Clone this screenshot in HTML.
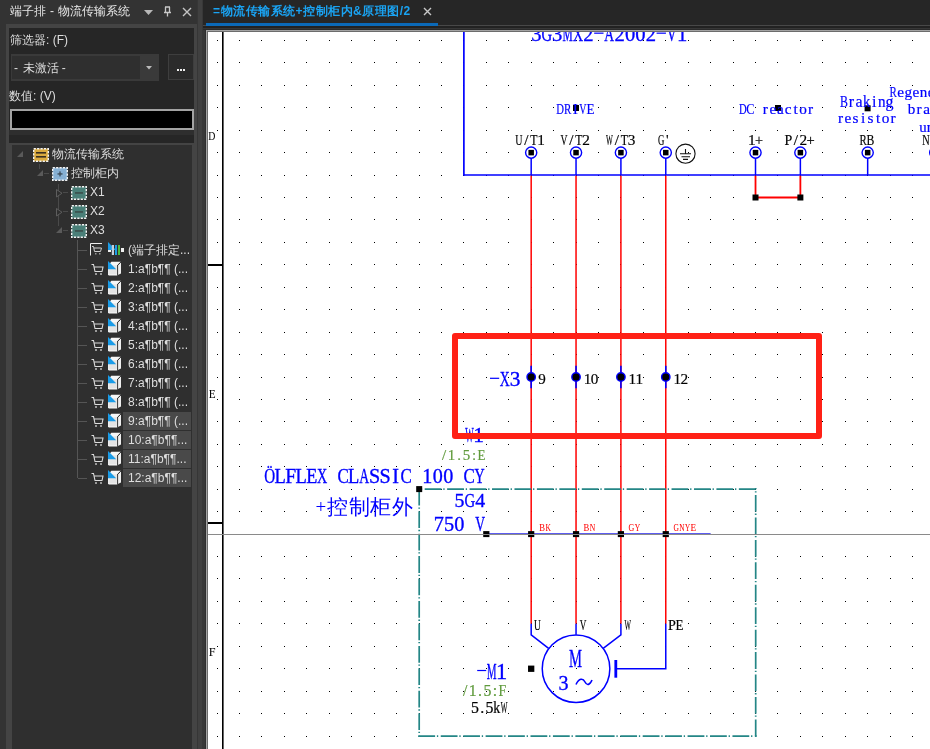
<!DOCTYPE html>
<html><head><meta charset="utf-8"><style>
html,body{margin:0;padding:0;width:930px;height:749px;overflow:hidden;background:#333}
</style></head><body>
<div style="position:relative;width:930px;height:749px;overflow:hidden;will-change:transform">

<div style="position:absolute;left:0;top:0;width:197px;height:749px;background:#333"></div>
<div style="position:absolute;left:10px;top:4px;font:12px 'Liberation Sans',sans-serif;color:#dedede;white-space:nowrap;line-height:14px;color:#e8e8e8;letter-spacing:0.15px">端子排 - 物流传输系统</div>
<svg style="position:absolute;left:143px;top:9px" width="11" height="7"><path d="M1 1H10L5.5 6Z" fill="#b8b8b8"/></svg>
<svg style="position:absolute;left:163px;top:6px" width="9" height="11"><path d="M2 1H7M2.5 1V6.5H6.5V1M1 6.5H8M4.5 6.5V10.5" fill="none" stroke="#c8c8c8" stroke-width="1.3"/></svg>
<svg style="position:absolute;left:182px;top:7px" width="10" height="10"><path d="M1 1L9 9M9 1L1 9" stroke="#c4c4c4" stroke-width="1.4"/></svg>
<div style="position:absolute;left:6px;top:24px;width:191px;height:725px;background:#444"></div>
<div style="position:absolute;left:9px;top:28px;width:185px;height:721px;background:#262626"></div>
<div style="position:absolute;left:10px;top:33px;font:12px 'Liberation Sans',sans-serif;color:#dedede;white-space:nowrap;line-height:14px">筛选器: (F)</div>
<div style="position:absolute;left:11px;top:54px;width:148px;height:27px;background:#3a3a3a"></div>
<div style="position:absolute;left:12px;top:56px;width:128px;height:23px;background:#2f2f2f"></div>
<div style="position:absolute;left:14px;top:61px;font:12px 'Liberation Sans',sans-serif;color:#dedede;white-space:nowrap;line-height:14px">-</div><div style="position:absolute;left:22.5px;top:61px;font:12px 'Liberation Sans',sans-serif;color:#dedede;white-space:nowrap;line-height:14px">未激活 -</div>
<svg style="position:absolute;left:146px;top:66px" width="6" height="4"><path d="M0 0H6L3 3.5Z" fill="#bbb"/></svg>
<div style="position:absolute;left:168px;top:54px;width:24px;height:24px;border:1px solid #3e3e3e;background:#2b2b2b"></div>
<div style="position:absolute;left:177px;top:69px;width:2px;height:2px;background:#eee;box-shadow:3px 0 #eee,6px 0 #eee"></div>
<div style="position:absolute;left:9px;top:89px;font:12px 'Liberation Sans',sans-serif;color:#dedede;white-space:nowrap;line-height:14px">数值: (V)</div>
<div style="position:absolute;left:10px;top:109px;width:180px;height:17px;border:2px solid #a3a3a3;background:#000"></div>
<div style="position:absolute;left:9px;top:130px;width:185px;height:5px;background:#2e2e2e"></div>
<div style="position:absolute;left:9px;top:143px;width:185px;height:606px;background:#444"></div>
<div style="position:absolute;left:12px;top:145px;width:180px;height:604px;background:#2f2f2f"></div>
<div style="position:absolute;left:39px;top:164px;width:1px;height:5px;background:#4a4a4a"></div><div style="position:absolute;left:44px;top:173px;width:5px;height:1px;background:#4a4a4a"></div><div style="position:absolute;left:58px;top:184px;width:1px;height:42px;background:#4a4a4a"></div><div style="position:absolute;left:63px;top:192px;width:5px;height:1px;background:#4a4a4a"></div><div style="position:absolute;left:63px;top:211px;width:5px;height:1px;background:#4a4a4a"></div><div style="position:absolute;left:63px;top:230px;width:5px;height:1px;background:#4a4a4a"></div><div style="position:absolute;left:77px;top:240px;width:1px;height:238px;background:#555"></div><svg style="position:absolute;left:17px;top:151px" width="6" height="6"><path d="M6 0V6H0Z" fill="#5a5a5a"/></svg><svg style="position:absolute;left:33px;top:148px" width="17" height="15"><rect x="0.7" y="0.7" width="14.6" height="12.6" fill="#d9aa3f" stroke="#f4f4f4" stroke-width="1.4" stroke-dasharray="2.2 1.2"/><rect x="3" y="4" width="10" height="1.6" fill="#3a3020"/><rect x="3" y="8" width="10" height="1.6" fill="#3a3020"/></svg><div style="position:absolute;font:12px 'Liberation Sans',sans-serif;color:#dedede;white-space:nowrap;line-height:14px;left:52px;top:147px;">物流传输系统</div><svg style="position:absolute;left:37px;top:170px" width="6" height="6"><path d="M6 0V6H0Z" fill="#5a5a5a"/></svg><svg style="position:absolute;left:52px;top:167px" width="17" height="15"><rect x="0.7" y="0.7" width="14.6" height="12.6" fill="#86b0d4" stroke="#f4f4f4" stroke-width="1.4" stroke-dasharray="2.2 1.2"/><rect x="5.5" y="6.3" width="5" height="1.3" fill="#3b4a58"/><rect x="7.35" y="4.4" width="1.3" height="5" fill="#3b4a58"/></svg><div style="position:absolute;font:12px 'Liberation Sans',sans-serif;color:#dedede;white-space:nowrap;line-height:14px;left:71px;top:166px;">控制柜内</div><svg style="position:absolute;left:56px;top:189px" width="7" height="10"><path d="M0.5 0.5V8L6 4.25Z" fill="#2f2f2f" stroke="#5e5e5e" stroke-width="1"/></svg><svg style="position:absolute;left:71px;top:186px" width="17" height="15"><rect x="0.7" y="0.7" width="14.6" height="12.6" fill="#4a7f78" stroke="#f4f4f4" stroke-width="1.4" stroke-dasharray="2.2 1.2"/><rect x="4" y="6.2" width="8" height="1.5" fill="#3a4a48"/></svg><div style="position:absolute;font:12px 'Liberation Sans',sans-serif;color:#dedede;white-space:nowrap;line-height:14px;left:90px;top:185px;">X1</div><svg style="position:absolute;left:56px;top:208px" width="7" height="10"><path d="M0.5 0.5V8L6 4.25Z" fill="#2f2f2f" stroke="#5e5e5e" stroke-width="1"/></svg><svg style="position:absolute;left:71px;top:205px" width="17" height="15"><rect x="0.7" y="0.7" width="14.6" height="12.6" fill="#4a7f78" stroke="#f4f4f4" stroke-width="1.4" stroke-dasharray="2.2 1.2"/><rect x="4" y="6.2" width="8" height="1.5" fill="#3a4a48"/></svg><div style="position:absolute;font:12px 'Liberation Sans',sans-serif;color:#dedede;white-space:nowrap;line-height:14px;left:90px;top:204px;">X2</div><svg style="position:absolute;left:56px;top:227px" width="6" height="6"><path d="M6 0V6H0Z" fill="#5a5a5a"/></svg><svg style="position:absolute;left:71px;top:224px" width="17" height="15"><rect x="0.7" y="0.7" width="14.6" height="12.6" fill="#4a7f78" stroke="#f4f4f4" stroke-width="1.4" stroke-dasharray="2.2 1.2"/><rect x="4" y="6.2" width="8" height="1.5" fill="#3a4a48"/></svg><div style="position:absolute;font:12px 'Liberation Sans',sans-serif;color:#dedede;white-space:nowrap;line-height:14px;left:90px;top:223px;">X3</div><div style="position:absolute;left:78px;top:250px;width:9px;height:1px;background:#555"></div><svg style="position:absolute;left:89px;top:242px" width="14" height="14"><path d="M1.5 13.5V1.5H13" fill="none" stroke="#ececec" stroke-width="1"/><path d="M3 4.5H4.5L5.5 9.5H11.5L12.5 6H5" fill="none" stroke="#d0d0d0" stroke-width="1"/><rect x="6" y="11" width="1.5" height="1.5" fill="#999"/><rect x="10" y="11" width="1.5" height="1.5" fill="#999"/></svg><svg style="position:absolute;left:108px;top:242px" width="18" height="14"><path d="M0 0V8H8Z" fill="#1d9ce6"/><rect x="3.8" y="3" width="2.2" height="10" fill="#c5d0da"/><rect x="7" y="3" width="2" height="10" fill="#1d9ce6"/><rect x="10" y="3" width="2" height="10" fill="#4dbb3f"/><rect x="13" y="6" width="3" height="4" fill="#f0f0f0"/><rect x="0" y="8" width="3" height="2" fill="#f0f0f0"/></svg><div style="position:absolute;font:12px 'Liberation Sans',sans-serif;color:#dedede;white-space:nowrap;line-height:14px;left:128px;top:243px;">(端子排定...</div><div style="position:absolute;left:78px;top:269px;width:9px;height:1px;background:#555"></div><svg style="position:absolute;left:91px;top:263px" width="13" height="13"><path d="M0.5 1.5H2.5L4 8.5H11L12 4H3.2" fill="none" stroke="#dcdcdc" stroke-width="1.1"/><rect x="4" y="10" width="2" height="2" fill="#9a9a9a"/><rect x="9" y="10" width="2" height="2" fill="#9a9a9a"/></svg><svg style="position:absolute;left:108px;top:261px" width="14" height="15"><path d="M3.3 0.8H12.8L9.6 4.2H0.5Z" fill="#f6f6f6"/><path d="M9.9 4.2L13 1.3V12.5L9.9 14Z" fill="#efefef"/><path d="M0.6 4.2H9.3V14H0.6Z" fill="#e4e4e4" stroke="#fafafa" stroke-width="1"/><path d="M9.6 4V14.2M9.6 4.2L12.8 1.2" stroke="#222" stroke-width="0.9" fill="none"/><path d="M0 0V8.2H8.2Z" fill="#1a9ce8"/></svg><div style="position:absolute;font:12px 'Liberation Sans',sans-serif;color:#dedede;white-space:nowrap;line-height:14px;left:128px;top:262px;">1:a¶b¶¶ (...</div><div style="position:absolute;left:78px;top:288px;width:9px;height:1px;background:#555"></div><svg style="position:absolute;left:91px;top:282px" width="13" height="13"><path d="M0.5 1.5H2.5L4 8.5H11L12 4H3.2" fill="none" stroke="#dcdcdc" stroke-width="1.1"/><rect x="4" y="10" width="2" height="2" fill="#9a9a9a"/><rect x="9" y="10" width="2" height="2" fill="#9a9a9a"/></svg><svg style="position:absolute;left:108px;top:280px" width="14" height="15"><path d="M3.3 0.8H12.8L9.6 4.2H0.5Z" fill="#f6f6f6"/><path d="M9.9 4.2L13 1.3V12.5L9.9 14Z" fill="#efefef"/><path d="M0.6 4.2H9.3V14H0.6Z" fill="#e4e4e4" stroke="#fafafa" stroke-width="1"/><path d="M9.6 4V14.2M9.6 4.2L12.8 1.2" stroke="#222" stroke-width="0.9" fill="none"/><path d="M0 0V8.2H8.2Z" fill="#1a9ce8"/></svg><div style="position:absolute;font:12px 'Liberation Sans',sans-serif;color:#dedede;white-space:nowrap;line-height:14px;left:128px;top:281px;">2:a¶b¶¶ (...</div><div style="position:absolute;left:78px;top:307px;width:9px;height:1px;background:#555"></div><svg style="position:absolute;left:91px;top:301px" width="13" height="13"><path d="M0.5 1.5H2.5L4 8.5H11L12 4H3.2" fill="none" stroke="#dcdcdc" stroke-width="1.1"/><rect x="4" y="10" width="2" height="2" fill="#9a9a9a"/><rect x="9" y="10" width="2" height="2" fill="#9a9a9a"/></svg><svg style="position:absolute;left:108px;top:299px" width="14" height="15"><path d="M3.3 0.8H12.8L9.6 4.2H0.5Z" fill="#f6f6f6"/><path d="M9.9 4.2L13 1.3V12.5L9.9 14Z" fill="#efefef"/><path d="M0.6 4.2H9.3V14H0.6Z" fill="#e4e4e4" stroke="#fafafa" stroke-width="1"/><path d="M9.6 4V14.2M9.6 4.2L12.8 1.2" stroke="#222" stroke-width="0.9" fill="none"/><path d="M0 0V8.2H8.2Z" fill="#1a9ce8"/></svg><div style="position:absolute;font:12px 'Liberation Sans',sans-serif;color:#dedede;white-space:nowrap;line-height:14px;left:128px;top:300px;">3:a¶b¶¶ (...</div><div style="position:absolute;left:78px;top:326px;width:9px;height:1px;background:#555"></div><svg style="position:absolute;left:91px;top:320px" width="13" height="13"><path d="M0.5 1.5H2.5L4 8.5H11L12 4H3.2" fill="none" stroke="#dcdcdc" stroke-width="1.1"/><rect x="4" y="10" width="2" height="2" fill="#9a9a9a"/><rect x="9" y="10" width="2" height="2" fill="#9a9a9a"/></svg><svg style="position:absolute;left:108px;top:318px" width="14" height="15"><path d="M3.3 0.8H12.8L9.6 4.2H0.5Z" fill="#f6f6f6"/><path d="M9.9 4.2L13 1.3V12.5L9.9 14Z" fill="#efefef"/><path d="M0.6 4.2H9.3V14H0.6Z" fill="#e4e4e4" stroke="#fafafa" stroke-width="1"/><path d="M9.6 4V14.2M9.6 4.2L12.8 1.2" stroke="#222" stroke-width="0.9" fill="none"/><path d="M0 0V8.2H8.2Z" fill="#1a9ce8"/></svg><div style="position:absolute;font:12px 'Liberation Sans',sans-serif;color:#dedede;white-space:nowrap;line-height:14px;left:128px;top:319px;">4:a¶b¶¶ (...</div><div style="position:absolute;left:78px;top:345px;width:9px;height:1px;background:#555"></div><svg style="position:absolute;left:91px;top:339px" width="13" height="13"><path d="M0.5 1.5H2.5L4 8.5H11L12 4H3.2" fill="none" stroke="#dcdcdc" stroke-width="1.1"/><rect x="4" y="10" width="2" height="2" fill="#9a9a9a"/><rect x="9" y="10" width="2" height="2" fill="#9a9a9a"/></svg><svg style="position:absolute;left:108px;top:337px" width="14" height="15"><path d="M3.3 0.8H12.8L9.6 4.2H0.5Z" fill="#f6f6f6"/><path d="M9.9 4.2L13 1.3V12.5L9.9 14Z" fill="#efefef"/><path d="M0.6 4.2H9.3V14H0.6Z" fill="#e4e4e4" stroke="#fafafa" stroke-width="1"/><path d="M9.6 4V14.2M9.6 4.2L12.8 1.2" stroke="#222" stroke-width="0.9" fill="none"/><path d="M0 0V8.2H8.2Z" fill="#1a9ce8"/></svg><div style="position:absolute;font:12px 'Liberation Sans',sans-serif;color:#dedede;white-space:nowrap;line-height:14px;left:128px;top:338px;">5:a¶b¶¶ (...</div><div style="position:absolute;left:78px;top:364px;width:9px;height:1px;background:#555"></div><svg style="position:absolute;left:91px;top:358px" width="13" height="13"><path d="M0.5 1.5H2.5L4 8.5H11L12 4H3.2" fill="none" stroke="#dcdcdc" stroke-width="1.1"/><rect x="4" y="10" width="2" height="2" fill="#9a9a9a"/><rect x="9" y="10" width="2" height="2" fill="#9a9a9a"/></svg><svg style="position:absolute;left:108px;top:356px" width="14" height="15"><path d="M3.3 0.8H12.8L9.6 4.2H0.5Z" fill="#f6f6f6"/><path d="M9.9 4.2L13 1.3V12.5L9.9 14Z" fill="#efefef"/><path d="M0.6 4.2H9.3V14H0.6Z" fill="#e4e4e4" stroke="#fafafa" stroke-width="1"/><path d="M9.6 4V14.2M9.6 4.2L12.8 1.2" stroke="#222" stroke-width="0.9" fill="none"/><path d="M0 0V8.2H8.2Z" fill="#1a9ce8"/></svg><div style="position:absolute;font:12px 'Liberation Sans',sans-serif;color:#dedede;white-space:nowrap;line-height:14px;left:128px;top:357px;">6:a¶b¶¶ (...</div><div style="position:absolute;left:78px;top:383px;width:9px;height:1px;background:#555"></div><svg style="position:absolute;left:91px;top:377px" width="13" height="13"><path d="M0.5 1.5H2.5L4 8.5H11L12 4H3.2" fill="none" stroke="#dcdcdc" stroke-width="1.1"/><rect x="4" y="10" width="2" height="2" fill="#9a9a9a"/><rect x="9" y="10" width="2" height="2" fill="#9a9a9a"/></svg><svg style="position:absolute;left:108px;top:375px" width="14" height="15"><path d="M3.3 0.8H12.8L9.6 4.2H0.5Z" fill="#f6f6f6"/><path d="M9.9 4.2L13 1.3V12.5L9.9 14Z" fill="#efefef"/><path d="M0.6 4.2H9.3V14H0.6Z" fill="#e4e4e4" stroke="#fafafa" stroke-width="1"/><path d="M9.6 4V14.2M9.6 4.2L12.8 1.2" stroke="#222" stroke-width="0.9" fill="none"/><path d="M0 0V8.2H8.2Z" fill="#1a9ce8"/></svg><div style="position:absolute;font:12px 'Liberation Sans',sans-serif;color:#dedede;white-space:nowrap;line-height:14px;left:128px;top:376px;">7:a¶b¶¶ (...</div><div style="position:absolute;left:78px;top:402px;width:9px;height:1px;background:#555"></div><svg style="position:absolute;left:91px;top:396px" width="13" height="13"><path d="M0.5 1.5H2.5L4 8.5H11L12 4H3.2" fill="none" stroke="#dcdcdc" stroke-width="1.1"/><rect x="4" y="10" width="2" height="2" fill="#9a9a9a"/><rect x="9" y="10" width="2" height="2" fill="#9a9a9a"/></svg><svg style="position:absolute;left:108px;top:394px" width="14" height="15"><path d="M3.3 0.8H12.8L9.6 4.2H0.5Z" fill="#f6f6f6"/><path d="M9.9 4.2L13 1.3V12.5L9.9 14Z" fill="#efefef"/><path d="M0.6 4.2H9.3V14H0.6Z" fill="#e4e4e4" stroke="#fafafa" stroke-width="1"/><path d="M9.6 4V14.2M9.6 4.2L12.8 1.2" stroke="#222" stroke-width="0.9" fill="none"/><path d="M0 0V8.2H8.2Z" fill="#1a9ce8"/></svg><div style="position:absolute;font:12px 'Liberation Sans',sans-serif;color:#dedede;white-space:nowrap;line-height:14px;left:128px;top:395px;">8:a¶b¶¶ (...</div><div style="position:absolute;left:78px;top:421px;width:9px;height:1px;background:#555"></div><div style="position:absolute;left:123px;top:412px;width:68px;height:18px;background:#494949"></div><svg style="position:absolute;left:91px;top:415px" width="13" height="13"><path d="M0.5 1.5H2.5L4 8.5H11L12 4H3.2" fill="none" stroke="#dcdcdc" stroke-width="1.1"/><rect x="4" y="10" width="2" height="2" fill="#9a9a9a"/><rect x="9" y="10" width="2" height="2" fill="#9a9a9a"/></svg><svg style="position:absolute;left:108px;top:413px" width="14" height="15"><path d="M3.3 0.8H12.8L9.6 4.2H0.5Z" fill="#f6f6f6"/><path d="M9.9 4.2L13 1.3V12.5L9.9 14Z" fill="#efefef"/><path d="M0.6 4.2H9.3V14H0.6Z" fill="#e4e4e4" stroke="#fafafa" stroke-width="1"/><path d="M9.6 4V14.2M9.6 4.2L12.8 1.2" stroke="#222" stroke-width="0.9" fill="none"/><path d="M0 0V8.2H8.2Z" fill="#1a9ce8"/></svg><div style="position:absolute;font:12px 'Liberation Sans',sans-serif;color:#dedede;white-space:nowrap;line-height:14px;left:128px;top:414px;">9:a¶b¶¶ (...</div><div style="position:absolute;left:78px;top:440px;width:9px;height:1px;background:#555"></div><div style="position:absolute;left:123px;top:431px;width:68px;height:18px;background:#494949"></div><svg style="position:absolute;left:91px;top:434px" width="13" height="13"><path d="M0.5 1.5H2.5L4 8.5H11L12 4H3.2" fill="none" stroke="#dcdcdc" stroke-width="1.1"/><rect x="4" y="10" width="2" height="2" fill="#9a9a9a"/><rect x="9" y="10" width="2" height="2" fill="#9a9a9a"/></svg><svg style="position:absolute;left:108px;top:432px" width="14" height="15"><path d="M3.3 0.8H12.8L9.6 4.2H0.5Z" fill="#f6f6f6"/><path d="M9.9 4.2L13 1.3V12.5L9.9 14Z" fill="#efefef"/><path d="M0.6 4.2H9.3V14H0.6Z" fill="#e4e4e4" stroke="#fafafa" stroke-width="1"/><path d="M9.6 4V14.2M9.6 4.2L12.8 1.2" stroke="#222" stroke-width="0.9" fill="none"/><path d="M0 0V8.2H8.2Z" fill="#1a9ce8"/></svg><div style="position:absolute;font:12px 'Liberation Sans',sans-serif;color:#dedede;white-space:nowrap;line-height:14px;left:128px;top:433px;">10:a¶b¶¶...</div><div style="position:absolute;left:78px;top:459px;width:9px;height:1px;background:#555"></div><div style="position:absolute;left:123px;top:450px;width:68px;height:18px;background:#494949"></div><svg style="position:absolute;left:91px;top:453px" width="13" height="13"><path d="M0.5 1.5H2.5L4 8.5H11L12 4H3.2" fill="none" stroke="#dcdcdc" stroke-width="1.1"/><rect x="4" y="10" width="2" height="2" fill="#9a9a9a"/><rect x="9" y="10" width="2" height="2" fill="#9a9a9a"/></svg><svg style="position:absolute;left:108px;top:451px" width="14" height="15"><path d="M3.3 0.8H12.8L9.6 4.2H0.5Z" fill="#f6f6f6"/><path d="M9.9 4.2L13 1.3V12.5L9.9 14Z" fill="#efefef"/><path d="M0.6 4.2H9.3V14H0.6Z" fill="#e4e4e4" stroke="#fafafa" stroke-width="1"/><path d="M9.6 4V14.2M9.6 4.2L12.8 1.2" stroke="#222" stroke-width="0.9" fill="none"/><path d="M0 0V8.2H8.2Z" fill="#1a9ce8"/></svg><div style="position:absolute;font:12px 'Liberation Sans',sans-serif;color:#dedede;white-space:nowrap;line-height:14px;left:128px;top:452px;">11:a¶b¶¶...</div><div style="position:absolute;left:78px;top:478px;width:9px;height:1px;background:#555"></div><div style="position:absolute;left:123px;top:469px;width:68px;height:18px;background:#494949"></div><svg style="position:absolute;left:91px;top:472px" width="13" height="13"><path d="M0.5 1.5H2.5L4 8.5H11L12 4H3.2" fill="none" stroke="#dcdcdc" stroke-width="1.1"/><rect x="4" y="10" width="2" height="2" fill="#9a9a9a"/><rect x="9" y="10" width="2" height="2" fill="#9a9a9a"/></svg><svg style="position:absolute;left:108px;top:470px" width="14" height="15"><path d="M3.3 0.8H12.8L9.6 4.2H0.5Z" fill="#f6f6f6"/><path d="M9.9 4.2L13 1.3V12.5L9.9 14Z" fill="#efefef"/><path d="M0.6 4.2H9.3V14H0.6Z" fill="#e4e4e4" stroke="#fafafa" stroke-width="1"/><path d="M9.6 4V14.2M9.6 4.2L12.8 1.2" stroke="#222" stroke-width="0.9" fill="none"/><path d="M0 0V8.2H8.2Z" fill="#1a9ce8"/></svg><div style="position:absolute;font:12px 'Liberation Sans',sans-serif;color:#dedede;white-space:nowrap;line-height:14px;left:128px;top:471px;">12:a¶b¶¶...</div>
<div style="position:absolute;left:197px;top:0;width:9px;height:749px;background:linear-gradient(to right,#363636 0 1px,#404040 1px 5px,#383838 5px 8px,#2e2e2e 8px 9px)"></div>


<div style="position:absolute;left:203px;top:0;width:727px;height:30px;background:linear-gradient(to bottom,#262626 0 25px,#484848 25px 26px,#222 26px 28px,#363636 28px 29px,#2a2a2a 29px 30px)"></div>
<div style="position:absolute;left:206px;top:23px;width:232px;height:3px;background:#0b69b8"></div>
<div style="position:absolute;left:213px;top:3px;font:bold 12px 'Liberation Sans',sans-serif;color:#1aa3f2;white-space:nowrap;line-height:16px;letter-spacing:0.5px">=物流传输系统+控制柜内&amp;原理图/2</div>
<svg style="position:absolute;left:423px;top:7px" width="9" height="9"><path d="M1 1L8 8M8 1L1 8" stroke="#c8c8c8" stroke-width="1.4"/></svg>
<div style="position:absolute;left:206px;top:30px;width:724px;height:719px;background:#a3a3a3"></div>
<div style="position:absolute;left:207px;top:31px;width:723px;height:718px;background:#6c6c6c"></div>
<div style="position:absolute;left:208px;top:32px;width:722px;height:717px;background:#fff"></div>

<svg width="930" height="749" viewBox="0 0 930 749" style="position:absolute;left:0;top:0"><defs><clipPath id="cv"><rect x="208" y="32" width="722" height="717"/></clipPath></defs><g clip-path="url(#cv)"><path d="M217 40h1v1h-1zM217 62h1v1h-1zM217 85h1v1h-1zM217 107h1v1h-1zM217 130h1v1h-1zM217 152h1v1h-1zM217 175h1v1h-1zM217 197h1v1h-1zM217 219h1v1h-1zM217 242h1v1h-1zM217 264h1v1h-1zM217 287h1v1h-1zM217 309h1v1h-1zM217 332h1v1h-1zM217 354h1v1h-1zM217 377h1v1h-1zM217 399h1v1h-1zM217 421h1v1h-1zM217 444h1v1h-1zM217 466h1v1h-1zM217 489h1v1h-1zM217 511h1v1h-1zM217 534h1v1h-1zM217 556h1v1h-1zM217 578h1v1h-1zM217 601h1v1h-1zM217 623h1v1h-1zM217 646h1v1h-1zM217 668h1v1h-1zM217 691h1v1h-1zM217 713h1v1h-1zM217 736h1v1h-1zM239 40h1v1h-1zM239 62h1v1h-1zM239 85h1v1h-1zM239 107h1v1h-1zM239 130h1v1h-1zM239 152h1v1h-1zM239 175h1v1h-1zM239 197h1v1h-1zM239 219h1v1h-1zM239 242h1v1h-1zM239 264h1v1h-1zM239 287h1v1h-1zM239 309h1v1h-1zM239 332h1v1h-1zM239 354h1v1h-1zM239 377h1v1h-1zM239 399h1v1h-1zM239 421h1v1h-1zM239 444h1v1h-1zM239 466h1v1h-1zM239 489h1v1h-1zM239 511h1v1h-1zM239 534h1v1h-1zM239 556h1v1h-1zM239 578h1v1h-1zM239 601h1v1h-1zM239 623h1v1h-1zM239 646h1v1h-1zM239 668h1v1h-1zM239 691h1v1h-1zM239 713h1v1h-1zM239 736h1v1h-1zM261 40h1v1h-1zM261 62h1v1h-1zM261 85h1v1h-1zM261 107h1v1h-1zM261 130h1v1h-1zM261 152h1v1h-1zM261 175h1v1h-1zM261 197h1v1h-1zM261 219h1v1h-1zM261 242h1v1h-1zM261 264h1v1h-1zM261 287h1v1h-1zM261 309h1v1h-1zM261 332h1v1h-1zM261 354h1v1h-1zM261 377h1v1h-1zM261 399h1v1h-1zM261 421h1v1h-1zM261 444h1v1h-1zM261 466h1v1h-1zM261 489h1v1h-1zM261 511h1v1h-1zM261 534h1v1h-1zM261 556h1v1h-1zM261 578h1v1h-1zM261 601h1v1h-1zM261 623h1v1h-1zM261 646h1v1h-1zM261 668h1v1h-1zM261 691h1v1h-1zM261 713h1v1h-1zM261 736h1v1h-1zM284 40h1v1h-1zM284 62h1v1h-1zM284 85h1v1h-1zM284 107h1v1h-1zM284 130h1v1h-1zM284 152h1v1h-1zM284 175h1v1h-1zM284 197h1v1h-1zM284 219h1v1h-1zM284 242h1v1h-1zM284 264h1v1h-1zM284 287h1v1h-1zM284 309h1v1h-1zM284 332h1v1h-1zM284 354h1v1h-1zM284 377h1v1h-1zM284 399h1v1h-1zM284 421h1v1h-1zM284 444h1v1h-1zM284 466h1v1h-1zM284 489h1v1h-1zM284 511h1v1h-1zM284 534h1v1h-1zM284 556h1v1h-1zM284 578h1v1h-1zM284 601h1v1h-1zM284 623h1v1h-1zM284 646h1v1h-1zM284 668h1v1h-1zM284 691h1v1h-1zM284 713h1v1h-1zM284 736h1v1h-1zM306 40h1v1h-1zM306 62h1v1h-1zM306 85h1v1h-1zM306 107h1v1h-1zM306 130h1v1h-1zM306 152h1v1h-1zM306 175h1v1h-1zM306 197h1v1h-1zM306 219h1v1h-1zM306 242h1v1h-1zM306 264h1v1h-1zM306 287h1v1h-1zM306 309h1v1h-1zM306 332h1v1h-1zM306 354h1v1h-1zM306 377h1v1h-1zM306 399h1v1h-1zM306 421h1v1h-1zM306 444h1v1h-1zM306 466h1v1h-1zM306 489h1v1h-1zM306 511h1v1h-1zM306 534h1v1h-1zM306 556h1v1h-1zM306 578h1v1h-1zM306 601h1v1h-1zM306 623h1v1h-1zM306 646h1v1h-1zM306 668h1v1h-1zM306 691h1v1h-1zM306 713h1v1h-1zM306 736h1v1h-1zM329 40h1v1h-1zM329 62h1v1h-1zM329 85h1v1h-1zM329 107h1v1h-1zM329 130h1v1h-1zM329 152h1v1h-1zM329 175h1v1h-1zM329 197h1v1h-1zM329 219h1v1h-1zM329 242h1v1h-1zM329 264h1v1h-1zM329 287h1v1h-1zM329 309h1v1h-1zM329 332h1v1h-1zM329 354h1v1h-1zM329 377h1v1h-1zM329 399h1v1h-1zM329 421h1v1h-1zM329 444h1v1h-1zM329 466h1v1h-1zM329 489h1v1h-1zM329 511h1v1h-1zM329 534h1v1h-1zM329 556h1v1h-1zM329 578h1v1h-1zM329 601h1v1h-1zM329 623h1v1h-1zM329 646h1v1h-1zM329 668h1v1h-1zM329 691h1v1h-1zM329 713h1v1h-1zM329 736h1v1h-1zM351 40h1v1h-1zM351 62h1v1h-1zM351 85h1v1h-1zM351 107h1v1h-1zM351 130h1v1h-1zM351 152h1v1h-1zM351 175h1v1h-1zM351 197h1v1h-1zM351 219h1v1h-1zM351 242h1v1h-1zM351 264h1v1h-1zM351 287h1v1h-1zM351 309h1v1h-1zM351 332h1v1h-1zM351 354h1v1h-1zM351 377h1v1h-1zM351 399h1v1h-1zM351 421h1v1h-1zM351 444h1v1h-1zM351 466h1v1h-1zM351 489h1v1h-1zM351 511h1v1h-1zM351 534h1v1h-1zM351 556h1v1h-1zM351 578h1v1h-1zM351 601h1v1h-1zM351 623h1v1h-1zM351 646h1v1h-1zM351 668h1v1h-1zM351 691h1v1h-1zM351 713h1v1h-1zM351 736h1v1h-1zM374 40h1v1h-1zM374 62h1v1h-1zM374 85h1v1h-1zM374 107h1v1h-1zM374 130h1v1h-1zM374 152h1v1h-1zM374 175h1v1h-1zM374 197h1v1h-1zM374 219h1v1h-1zM374 242h1v1h-1zM374 264h1v1h-1zM374 287h1v1h-1zM374 309h1v1h-1zM374 332h1v1h-1zM374 354h1v1h-1zM374 377h1v1h-1zM374 399h1v1h-1zM374 421h1v1h-1zM374 444h1v1h-1zM374 466h1v1h-1zM374 489h1v1h-1zM374 511h1v1h-1zM374 534h1v1h-1zM374 556h1v1h-1zM374 578h1v1h-1zM374 601h1v1h-1zM374 623h1v1h-1zM374 646h1v1h-1zM374 668h1v1h-1zM374 691h1v1h-1zM374 713h1v1h-1zM374 736h1v1h-1zM396 40h1v1h-1zM396 62h1v1h-1zM396 85h1v1h-1zM396 107h1v1h-1zM396 130h1v1h-1zM396 152h1v1h-1zM396 175h1v1h-1zM396 197h1v1h-1zM396 219h1v1h-1zM396 242h1v1h-1zM396 264h1v1h-1zM396 287h1v1h-1zM396 309h1v1h-1zM396 332h1v1h-1zM396 354h1v1h-1zM396 377h1v1h-1zM396 399h1v1h-1zM396 421h1v1h-1zM396 444h1v1h-1zM396 466h1v1h-1zM396 489h1v1h-1zM396 511h1v1h-1zM396 534h1v1h-1zM396 556h1v1h-1zM396 578h1v1h-1zM396 601h1v1h-1zM396 623h1v1h-1zM396 646h1v1h-1zM396 668h1v1h-1zM396 691h1v1h-1zM396 713h1v1h-1zM396 736h1v1h-1zM419 40h1v1h-1zM419 62h1v1h-1zM419 85h1v1h-1zM419 107h1v1h-1zM419 130h1v1h-1zM419 152h1v1h-1zM419 175h1v1h-1zM419 197h1v1h-1zM419 219h1v1h-1zM419 242h1v1h-1zM419 264h1v1h-1zM419 287h1v1h-1zM419 309h1v1h-1zM419 332h1v1h-1zM419 354h1v1h-1zM419 377h1v1h-1zM419 399h1v1h-1zM419 421h1v1h-1zM419 444h1v1h-1zM419 466h1v1h-1zM419 489h1v1h-1zM419 511h1v1h-1zM419 534h1v1h-1zM419 556h1v1h-1zM419 578h1v1h-1zM419 601h1v1h-1zM419 623h1v1h-1zM419 646h1v1h-1zM419 668h1v1h-1zM419 691h1v1h-1zM419 713h1v1h-1zM419 736h1v1h-1zM441 40h1v1h-1zM441 62h1v1h-1zM441 85h1v1h-1zM441 107h1v1h-1zM441 130h1v1h-1zM441 152h1v1h-1zM441 175h1v1h-1zM441 197h1v1h-1zM441 219h1v1h-1zM441 242h1v1h-1zM441 264h1v1h-1zM441 287h1v1h-1zM441 309h1v1h-1zM441 332h1v1h-1zM441 354h1v1h-1zM441 377h1v1h-1zM441 399h1v1h-1zM441 421h1v1h-1zM441 444h1v1h-1zM441 466h1v1h-1zM441 489h1v1h-1zM441 511h1v1h-1zM441 534h1v1h-1zM441 556h1v1h-1zM441 578h1v1h-1zM441 601h1v1h-1zM441 623h1v1h-1zM441 646h1v1h-1zM441 668h1v1h-1zM441 691h1v1h-1zM441 713h1v1h-1zM441 736h1v1h-1zM463 40h1v1h-1zM463 62h1v1h-1zM463 85h1v1h-1zM463 107h1v1h-1zM463 130h1v1h-1zM463 152h1v1h-1zM463 175h1v1h-1zM463 197h1v1h-1zM463 219h1v1h-1zM463 242h1v1h-1zM463 264h1v1h-1zM463 287h1v1h-1zM463 309h1v1h-1zM463 332h1v1h-1zM463 354h1v1h-1zM463 377h1v1h-1zM463 399h1v1h-1zM463 421h1v1h-1zM463 444h1v1h-1zM463 466h1v1h-1zM463 489h1v1h-1zM463 511h1v1h-1zM463 534h1v1h-1zM463 556h1v1h-1zM463 578h1v1h-1zM463 601h1v1h-1zM463 623h1v1h-1zM463 646h1v1h-1zM463 668h1v1h-1zM463 691h1v1h-1zM463 713h1v1h-1zM463 736h1v1h-1zM486 40h1v1h-1zM486 62h1v1h-1zM486 85h1v1h-1zM486 107h1v1h-1zM486 130h1v1h-1zM486 152h1v1h-1zM486 175h1v1h-1zM486 197h1v1h-1zM486 219h1v1h-1zM486 242h1v1h-1zM486 264h1v1h-1zM486 287h1v1h-1zM486 309h1v1h-1zM486 332h1v1h-1zM486 354h1v1h-1zM486 377h1v1h-1zM486 399h1v1h-1zM486 421h1v1h-1zM486 444h1v1h-1zM486 466h1v1h-1zM486 489h1v1h-1zM486 511h1v1h-1zM486 534h1v1h-1zM486 556h1v1h-1zM486 578h1v1h-1zM486 601h1v1h-1zM486 623h1v1h-1zM486 646h1v1h-1zM486 668h1v1h-1zM486 691h1v1h-1zM486 713h1v1h-1zM486 736h1v1h-1zM508 40h1v1h-1zM508 62h1v1h-1zM508 85h1v1h-1zM508 107h1v1h-1zM508 130h1v1h-1zM508 152h1v1h-1zM508 175h1v1h-1zM508 197h1v1h-1zM508 219h1v1h-1zM508 242h1v1h-1zM508 264h1v1h-1zM508 287h1v1h-1zM508 309h1v1h-1zM508 332h1v1h-1zM508 354h1v1h-1zM508 377h1v1h-1zM508 399h1v1h-1zM508 421h1v1h-1zM508 444h1v1h-1zM508 466h1v1h-1zM508 489h1v1h-1zM508 511h1v1h-1zM508 534h1v1h-1zM508 556h1v1h-1zM508 578h1v1h-1zM508 601h1v1h-1zM508 623h1v1h-1zM508 646h1v1h-1zM508 668h1v1h-1zM508 691h1v1h-1zM508 713h1v1h-1zM508 736h1v1h-1zM531 40h1v1h-1zM531 62h1v1h-1zM531 85h1v1h-1zM531 107h1v1h-1zM531 130h1v1h-1zM531 152h1v1h-1zM531 175h1v1h-1zM531 197h1v1h-1zM531 219h1v1h-1zM531 242h1v1h-1zM531 264h1v1h-1zM531 287h1v1h-1zM531 309h1v1h-1zM531 332h1v1h-1zM531 354h1v1h-1zM531 377h1v1h-1zM531 399h1v1h-1zM531 421h1v1h-1zM531 444h1v1h-1zM531 466h1v1h-1zM531 489h1v1h-1zM531 511h1v1h-1zM531 534h1v1h-1zM531 556h1v1h-1zM531 578h1v1h-1zM531 601h1v1h-1zM531 623h1v1h-1zM531 646h1v1h-1zM531 668h1v1h-1zM531 691h1v1h-1zM531 713h1v1h-1zM531 736h1v1h-1zM553 40h1v1h-1zM553 62h1v1h-1zM553 85h1v1h-1zM553 107h1v1h-1zM553 130h1v1h-1zM553 152h1v1h-1zM553 175h1v1h-1zM553 197h1v1h-1zM553 219h1v1h-1zM553 242h1v1h-1zM553 264h1v1h-1zM553 287h1v1h-1zM553 309h1v1h-1zM553 332h1v1h-1zM553 354h1v1h-1zM553 377h1v1h-1zM553 399h1v1h-1zM553 421h1v1h-1zM553 444h1v1h-1zM553 466h1v1h-1zM553 489h1v1h-1zM553 511h1v1h-1zM553 534h1v1h-1zM553 556h1v1h-1zM553 578h1v1h-1zM553 601h1v1h-1zM553 623h1v1h-1zM553 646h1v1h-1zM553 668h1v1h-1zM553 691h1v1h-1zM553 713h1v1h-1zM553 736h1v1h-1zM576 40h1v1h-1zM576 62h1v1h-1zM576 85h1v1h-1zM576 107h1v1h-1zM576 130h1v1h-1zM576 152h1v1h-1zM576 175h1v1h-1zM576 197h1v1h-1zM576 219h1v1h-1zM576 242h1v1h-1zM576 264h1v1h-1zM576 287h1v1h-1zM576 309h1v1h-1zM576 332h1v1h-1zM576 354h1v1h-1zM576 377h1v1h-1zM576 399h1v1h-1zM576 421h1v1h-1zM576 444h1v1h-1zM576 466h1v1h-1zM576 489h1v1h-1zM576 511h1v1h-1zM576 534h1v1h-1zM576 556h1v1h-1zM576 578h1v1h-1zM576 601h1v1h-1zM576 623h1v1h-1zM576 646h1v1h-1zM576 668h1v1h-1zM576 691h1v1h-1zM576 713h1v1h-1zM576 736h1v1h-1zM598 40h1v1h-1zM598 62h1v1h-1zM598 85h1v1h-1zM598 107h1v1h-1zM598 130h1v1h-1zM598 152h1v1h-1zM598 175h1v1h-1zM598 197h1v1h-1zM598 219h1v1h-1zM598 242h1v1h-1zM598 264h1v1h-1zM598 287h1v1h-1zM598 309h1v1h-1zM598 332h1v1h-1zM598 354h1v1h-1zM598 377h1v1h-1zM598 399h1v1h-1zM598 421h1v1h-1zM598 444h1v1h-1zM598 466h1v1h-1zM598 489h1v1h-1zM598 511h1v1h-1zM598 534h1v1h-1zM598 556h1v1h-1zM598 578h1v1h-1zM598 601h1v1h-1zM598 623h1v1h-1zM598 646h1v1h-1zM598 668h1v1h-1zM598 691h1v1h-1zM598 713h1v1h-1zM598 736h1v1h-1zM620 40h1v1h-1zM620 62h1v1h-1zM620 85h1v1h-1zM620 107h1v1h-1zM620 130h1v1h-1zM620 152h1v1h-1zM620 175h1v1h-1zM620 197h1v1h-1zM620 219h1v1h-1zM620 242h1v1h-1zM620 264h1v1h-1zM620 287h1v1h-1zM620 309h1v1h-1zM620 332h1v1h-1zM620 354h1v1h-1zM620 377h1v1h-1zM620 399h1v1h-1zM620 421h1v1h-1zM620 444h1v1h-1zM620 466h1v1h-1zM620 489h1v1h-1zM620 511h1v1h-1zM620 534h1v1h-1zM620 556h1v1h-1zM620 578h1v1h-1zM620 601h1v1h-1zM620 623h1v1h-1zM620 646h1v1h-1zM620 668h1v1h-1zM620 691h1v1h-1zM620 713h1v1h-1zM620 736h1v1h-1zM643 40h1v1h-1zM643 62h1v1h-1zM643 85h1v1h-1zM643 107h1v1h-1zM643 130h1v1h-1zM643 152h1v1h-1zM643 175h1v1h-1zM643 197h1v1h-1zM643 219h1v1h-1zM643 242h1v1h-1zM643 264h1v1h-1zM643 287h1v1h-1zM643 309h1v1h-1zM643 332h1v1h-1zM643 354h1v1h-1zM643 377h1v1h-1zM643 399h1v1h-1zM643 421h1v1h-1zM643 444h1v1h-1zM643 466h1v1h-1zM643 489h1v1h-1zM643 511h1v1h-1zM643 534h1v1h-1zM643 556h1v1h-1zM643 578h1v1h-1zM643 601h1v1h-1zM643 623h1v1h-1zM643 646h1v1h-1zM643 668h1v1h-1zM643 691h1v1h-1zM643 713h1v1h-1zM643 736h1v1h-1zM665 40h1v1h-1zM665 62h1v1h-1zM665 85h1v1h-1zM665 107h1v1h-1zM665 130h1v1h-1zM665 152h1v1h-1zM665 175h1v1h-1zM665 197h1v1h-1zM665 219h1v1h-1zM665 242h1v1h-1zM665 264h1v1h-1zM665 287h1v1h-1zM665 309h1v1h-1zM665 332h1v1h-1zM665 354h1v1h-1zM665 377h1v1h-1zM665 399h1v1h-1zM665 421h1v1h-1zM665 444h1v1h-1zM665 466h1v1h-1zM665 489h1v1h-1zM665 511h1v1h-1zM665 534h1v1h-1zM665 556h1v1h-1zM665 578h1v1h-1zM665 601h1v1h-1zM665 623h1v1h-1zM665 646h1v1h-1zM665 668h1v1h-1zM665 691h1v1h-1zM665 713h1v1h-1zM665 736h1v1h-1zM688 40h1v1h-1zM688 62h1v1h-1zM688 85h1v1h-1zM688 107h1v1h-1zM688 130h1v1h-1zM688 152h1v1h-1zM688 175h1v1h-1zM688 197h1v1h-1zM688 219h1v1h-1zM688 242h1v1h-1zM688 264h1v1h-1zM688 287h1v1h-1zM688 309h1v1h-1zM688 332h1v1h-1zM688 354h1v1h-1zM688 377h1v1h-1zM688 399h1v1h-1zM688 421h1v1h-1zM688 444h1v1h-1zM688 466h1v1h-1zM688 489h1v1h-1zM688 511h1v1h-1zM688 534h1v1h-1zM688 556h1v1h-1zM688 578h1v1h-1zM688 601h1v1h-1zM688 623h1v1h-1zM688 646h1v1h-1zM688 668h1v1h-1zM688 691h1v1h-1zM688 713h1v1h-1zM688 736h1v1h-1zM710 40h1v1h-1zM710 62h1v1h-1zM710 85h1v1h-1zM710 107h1v1h-1zM710 130h1v1h-1zM710 152h1v1h-1zM710 175h1v1h-1zM710 197h1v1h-1zM710 219h1v1h-1zM710 242h1v1h-1zM710 264h1v1h-1zM710 287h1v1h-1zM710 309h1v1h-1zM710 332h1v1h-1zM710 354h1v1h-1zM710 377h1v1h-1zM710 399h1v1h-1zM710 421h1v1h-1zM710 444h1v1h-1zM710 466h1v1h-1zM710 489h1v1h-1zM710 511h1v1h-1zM710 534h1v1h-1zM710 556h1v1h-1zM710 578h1v1h-1zM710 601h1v1h-1zM710 623h1v1h-1zM710 646h1v1h-1zM710 668h1v1h-1zM710 691h1v1h-1zM710 713h1v1h-1zM710 736h1v1h-1zM733 40h1v1h-1zM733 62h1v1h-1zM733 85h1v1h-1zM733 107h1v1h-1zM733 130h1v1h-1zM733 152h1v1h-1zM733 175h1v1h-1zM733 197h1v1h-1zM733 219h1v1h-1zM733 242h1v1h-1zM733 264h1v1h-1zM733 287h1v1h-1zM733 309h1v1h-1zM733 332h1v1h-1zM733 354h1v1h-1zM733 377h1v1h-1zM733 399h1v1h-1zM733 421h1v1h-1zM733 444h1v1h-1zM733 466h1v1h-1zM733 489h1v1h-1zM733 511h1v1h-1zM733 534h1v1h-1zM733 556h1v1h-1zM733 578h1v1h-1zM733 601h1v1h-1zM733 623h1v1h-1zM733 646h1v1h-1zM733 668h1v1h-1zM733 691h1v1h-1zM733 713h1v1h-1zM733 736h1v1h-1zM755 40h1v1h-1zM755 62h1v1h-1zM755 85h1v1h-1zM755 107h1v1h-1zM755 130h1v1h-1zM755 152h1v1h-1zM755 175h1v1h-1zM755 197h1v1h-1zM755 219h1v1h-1zM755 242h1v1h-1zM755 264h1v1h-1zM755 287h1v1h-1zM755 309h1v1h-1zM755 332h1v1h-1zM755 354h1v1h-1zM755 377h1v1h-1zM755 399h1v1h-1zM755 421h1v1h-1zM755 444h1v1h-1zM755 466h1v1h-1zM755 489h1v1h-1zM755 511h1v1h-1zM755 534h1v1h-1zM755 556h1v1h-1zM755 578h1v1h-1zM755 601h1v1h-1zM755 623h1v1h-1zM755 646h1v1h-1zM755 668h1v1h-1zM755 691h1v1h-1zM755 713h1v1h-1zM755 736h1v1h-1zM777 40h1v1h-1zM777 62h1v1h-1zM777 85h1v1h-1zM777 107h1v1h-1zM777 130h1v1h-1zM777 152h1v1h-1zM777 175h1v1h-1zM777 197h1v1h-1zM777 219h1v1h-1zM777 242h1v1h-1zM777 264h1v1h-1zM777 287h1v1h-1zM777 309h1v1h-1zM777 332h1v1h-1zM777 354h1v1h-1zM777 377h1v1h-1zM777 399h1v1h-1zM777 421h1v1h-1zM777 444h1v1h-1zM777 466h1v1h-1zM777 489h1v1h-1zM777 511h1v1h-1zM777 534h1v1h-1zM777 556h1v1h-1zM777 578h1v1h-1zM777 601h1v1h-1zM777 623h1v1h-1zM777 646h1v1h-1zM777 668h1v1h-1zM777 691h1v1h-1zM777 713h1v1h-1zM777 736h1v1h-1zM800 40h1v1h-1zM800 62h1v1h-1zM800 85h1v1h-1zM800 107h1v1h-1zM800 130h1v1h-1zM800 152h1v1h-1zM800 175h1v1h-1zM800 197h1v1h-1zM800 219h1v1h-1zM800 242h1v1h-1zM800 264h1v1h-1zM800 287h1v1h-1zM800 309h1v1h-1zM800 332h1v1h-1zM800 354h1v1h-1zM800 377h1v1h-1zM800 399h1v1h-1zM800 421h1v1h-1zM800 444h1v1h-1zM800 466h1v1h-1zM800 489h1v1h-1zM800 511h1v1h-1zM800 534h1v1h-1zM800 556h1v1h-1zM800 578h1v1h-1zM800 601h1v1h-1zM800 623h1v1h-1zM800 646h1v1h-1zM800 668h1v1h-1zM800 691h1v1h-1zM800 713h1v1h-1zM800 736h1v1h-1zM822 40h1v1h-1zM822 62h1v1h-1zM822 85h1v1h-1zM822 107h1v1h-1zM822 130h1v1h-1zM822 152h1v1h-1zM822 175h1v1h-1zM822 197h1v1h-1zM822 219h1v1h-1zM822 242h1v1h-1zM822 264h1v1h-1zM822 287h1v1h-1zM822 309h1v1h-1zM822 332h1v1h-1zM822 354h1v1h-1zM822 377h1v1h-1zM822 399h1v1h-1zM822 421h1v1h-1zM822 444h1v1h-1zM822 466h1v1h-1zM822 489h1v1h-1zM822 511h1v1h-1zM822 534h1v1h-1zM822 556h1v1h-1zM822 578h1v1h-1zM822 601h1v1h-1zM822 623h1v1h-1zM822 646h1v1h-1zM822 668h1v1h-1zM822 691h1v1h-1zM822 713h1v1h-1zM822 736h1v1h-1zM845 40h1v1h-1zM845 62h1v1h-1zM845 85h1v1h-1zM845 107h1v1h-1zM845 130h1v1h-1zM845 152h1v1h-1zM845 175h1v1h-1zM845 197h1v1h-1zM845 219h1v1h-1zM845 242h1v1h-1zM845 264h1v1h-1zM845 287h1v1h-1zM845 309h1v1h-1zM845 332h1v1h-1zM845 354h1v1h-1zM845 377h1v1h-1zM845 399h1v1h-1zM845 421h1v1h-1zM845 444h1v1h-1zM845 466h1v1h-1zM845 489h1v1h-1zM845 511h1v1h-1zM845 534h1v1h-1zM845 556h1v1h-1zM845 578h1v1h-1zM845 601h1v1h-1zM845 623h1v1h-1zM845 646h1v1h-1zM845 668h1v1h-1zM845 691h1v1h-1zM845 713h1v1h-1zM845 736h1v1h-1zM867 40h1v1h-1zM867 62h1v1h-1zM867 85h1v1h-1zM867 107h1v1h-1zM867 130h1v1h-1zM867 152h1v1h-1zM867 175h1v1h-1zM867 197h1v1h-1zM867 219h1v1h-1zM867 242h1v1h-1zM867 264h1v1h-1zM867 287h1v1h-1zM867 309h1v1h-1zM867 332h1v1h-1zM867 354h1v1h-1zM867 377h1v1h-1zM867 399h1v1h-1zM867 421h1v1h-1zM867 444h1v1h-1zM867 466h1v1h-1zM867 489h1v1h-1zM867 511h1v1h-1zM867 534h1v1h-1zM867 556h1v1h-1zM867 578h1v1h-1zM867 601h1v1h-1zM867 623h1v1h-1zM867 646h1v1h-1zM867 668h1v1h-1zM867 691h1v1h-1zM867 713h1v1h-1zM867 736h1v1h-1zM890 40h1v1h-1zM890 62h1v1h-1zM890 85h1v1h-1zM890 107h1v1h-1zM890 130h1v1h-1zM890 152h1v1h-1zM890 175h1v1h-1zM890 197h1v1h-1zM890 219h1v1h-1zM890 242h1v1h-1zM890 264h1v1h-1zM890 287h1v1h-1zM890 309h1v1h-1zM890 332h1v1h-1zM890 354h1v1h-1zM890 377h1v1h-1zM890 399h1v1h-1zM890 421h1v1h-1zM890 444h1v1h-1zM890 466h1v1h-1zM890 489h1v1h-1zM890 511h1v1h-1zM890 534h1v1h-1zM890 556h1v1h-1zM890 578h1v1h-1zM890 601h1v1h-1zM890 623h1v1h-1zM890 646h1v1h-1zM890 668h1v1h-1zM890 691h1v1h-1zM890 713h1v1h-1zM890 736h1v1h-1zM912 40h1v1h-1zM912 62h1v1h-1zM912 85h1v1h-1zM912 107h1v1h-1zM912 130h1v1h-1zM912 152h1v1h-1zM912 175h1v1h-1zM912 197h1v1h-1zM912 219h1v1h-1zM912 242h1v1h-1zM912 264h1v1h-1zM912 287h1v1h-1zM912 309h1v1h-1zM912 332h1v1h-1zM912 354h1v1h-1zM912 377h1v1h-1zM912 399h1v1h-1zM912 421h1v1h-1zM912 444h1v1h-1zM912 466h1v1h-1zM912 489h1v1h-1zM912 511h1v1h-1zM912 534h1v1h-1zM912 556h1v1h-1zM912 578h1v1h-1zM912 601h1v1h-1zM912 623h1v1h-1zM912 646h1v1h-1zM912 668h1v1h-1zM912 691h1v1h-1zM912 713h1v1h-1zM912 736h1v1h-1z" fill="#000"/><rect x="222" y="32" width="1.6" height="717" fill="#000"/><rect x="208" y="264" width="15" height="2" fill="#000"/><rect x="208" y="522" width="15" height="2" fill="#000"/><path d="M463.88 32.00V175.81" stroke="#0000ff" stroke-width="1.7"/><path d="M463.88 175.06H930.00" stroke="#0000ff" stroke-width="1.5"/><path d="M531.18 152.62V175.06" stroke="#0000ff" stroke-width="1.5"/><circle cx="531.18" cy="152.62" r="5.6" fill="#fff" stroke="#0000ff" stroke-width="1.4"/><rect x="528.43" y="149.87" width="5.5" height="5.5" fill="#000"/><path d="M576.04 152.62V175.06" stroke="#0000ff" stroke-width="1.5"/><circle cx="576.04" cy="152.62" r="5.6" fill="#fff" stroke="#0000ff" stroke-width="1.4"/><rect x="573.29" y="149.87" width="5.5" height="5.5" fill="#000"/><path d="M620.91 152.62V175.06" stroke="#0000ff" stroke-width="1.5"/><circle cx="620.91" cy="152.62" r="5.6" fill="#fff" stroke="#0000ff" stroke-width="1.4"/><rect x="618.16" y="149.87" width="5.5" height="5.5" fill="#000"/><path d="M665.77 152.62V175.06" stroke="#0000ff" stroke-width="1.5"/><circle cx="665.77" cy="152.62" r="5.6" fill="#fff" stroke="#0000ff" stroke-width="1.4"/><rect x="663.02" y="149.87" width="5.5" height="5.5" fill="#000"/><path d="M755.51 152.62V175.06" stroke="#0000ff" stroke-width="1.5"/><circle cx="755.51" cy="152.62" r="5.6" fill="#fff" stroke="#0000ff" stroke-width="1.4"/><rect x="752.76" y="149.87" width="5.5" height="5.5" fill="#000"/><path d="M800.37 152.62V175.06" stroke="#0000ff" stroke-width="1.5"/><circle cx="800.37" cy="152.62" r="5.6" fill="#fff" stroke="#0000ff" stroke-width="1.4"/><rect x="797.62" y="149.87" width="5.5" height="5.5" fill="#000"/><path d="M867.67 152.62V175.06" stroke="#0000ff" stroke-width="1.5"/><circle cx="867.67" cy="152.62" r="5.6" fill="#fff" stroke="#0000ff" stroke-width="1.4"/><rect x="864.92" y="149.87" width="5.5" height="5.5" fill="#000"/><circle cx="934.97" cy="152.62" r="5.3" fill="none" stroke="#0000ff" stroke-width="1.4"/><circle cx="685.5" cy="153.7" r="9.6" fill="none" stroke="#111" stroke-width="1.1"/><path d="M685.5 149V153.8M680 153.8H691M681.5 156.7H690M683 159.4H688" stroke="#111" stroke-width="1.1" fill="none"/><rect x="573.00" y="105.00" width="6" height="6" fill="#000"/><rect x="775.00" y="105.00" width="6" height="6" fill="#000"/><rect x="864.60" y="105.30" width="6" height="6" fill="#000"/><path d="M531.18 175.86V623.86" stroke="#ff0000" stroke-width="1.5"/><path d="M576.04 175.86V623.86" stroke="#ff0000" stroke-width="1.5"/><path d="M620.91 175.86V623.86" stroke="#ff0000" stroke-width="1.5"/><path d="M665.77 175.86V623.86" stroke="#ff0000" stroke-width="1.5"/><path d="M755.51 175.86V197.50H800.37V175.86" fill="none" stroke="#ff0000" stroke-width="1.8"/><rect x="752.51" y="194.50" width="6" height="6" fill="#000"/><rect x="797.37" y="194.50" width="6" height="6" fill="#000"/><path d="M531.18 365.80V388.24" stroke="#0000ff" stroke-width="1.6"/><circle cx="531.18" cy="377.02" r="4.2" fill="#000" stroke="#0000ff" stroke-width="1.4"/><rect x="528.78" y="374.62" width="4.8" height="4.8" fill="#000"/><path d="M576.04 365.80V388.24" stroke="#0000ff" stroke-width="1.6"/><circle cx="576.04" cy="377.02" r="4.2" fill="#000" stroke="#0000ff" stroke-width="1.4"/><rect x="573.64" y="374.62" width="4.8" height="4.8" fill="#000"/><path d="M620.91 365.80V388.24" stroke="#0000ff" stroke-width="1.6"/><circle cx="620.91" cy="377.02" r="4.2" fill="#000" stroke="#0000ff" stroke-width="1.4"/><rect x="618.51" y="374.62" width="4.8" height="4.8" fill="#000"/><path d="M665.77 365.80V388.24" stroke="#0000ff" stroke-width="1.6"/><circle cx="665.77" cy="377.02" r="4.2" fill="#000" stroke="#0000ff" stroke-width="1.4"/><rect x="663.38" y="374.62" width="4.8" height="4.8" fill="#000"/><path d="M420.86 489.10H422.16M424.70 489.10H441.50M443.30 489.10H444.60M447.14 489.10H463.94M465.74 489.10H467.04M469.58 489.10H486.38M488.18 489.10H489.48M492.02 489.10H508.82M510.62 489.10H511.92M514.46 489.10H531.26M533.06 489.10H534.36M536.90 489.10H553.70M555.50 489.10H556.80M559.34 489.10H576.14M577.94 489.10H579.24M581.78 489.10H598.58M600.38 489.10H601.68M604.22 489.10H621.02M622.82 489.10H624.12M626.66 489.10H643.46M645.26 489.10H646.56M649.10 489.10H665.90M667.70 489.10H669.00M671.54 489.10H688.34M690.14 489.10H691.44M693.98 489.10H710.78M712.58 489.10H713.88M716.42 489.10H733.22M735.02 489.10H736.32M738.86 489.10H755.66" stroke="#248686" stroke-width="1.7" fill="none"/><path d="M755.70 488.10V489.36M755.70 491.16V492.46M755.70 495.00V511.80M755.70 513.60V514.90M755.70 517.44V534.24M755.70 536.04V537.34M755.70 539.88V556.68M755.70 558.48V559.78M755.70 562.32V579.12M755.70 580.92V582.22M755.70 584.76V601.56M755.70 603.36V604.66M755.70 607.20V624.00M755.70 625.80V627.10M755.70 629.64V646.44M755.70 648.24V649.54M755.70 652.08V668.88M755.70 670.68V671.98M755.70 674.52V691.32M755.70 693.12V694.42M755.70 696.96V713.76M755.70 715.56V716.86M755.70 719.40V736.20" stroke="#248686" stroke-width="1.7" fill="none"/><path d="M418.30 736.10H435.10M436.90 736.10H438.20M440.74 736.10H457.54M459.34 736.10H460.64M463.18 736.10H479.98M481.78 736.10H483.08M485.62 736.10H502.42M504.22 736.10H505.52M508.06 736.10H524.86M526.66 736.10H527.96M530.50 736.10H547.30M549.10 736.10H550.40M552.94 736.10H569.74M571.54 736.10H572.84M575.38 736.10H592.18M593.98 736.10H595.28M597.82 736.10H614.62M616.42 736.10H617.72M620.26 736.10H637.06M638.86 736.10H640.16M642.70 736.10H659.50M661.30 736.10H662.60M665.14 736.10H681.94M683.74 736.10H685.04M687.58 736.10H704.38M706.18 736.10H707.48M710.02 736.10H726.82M728.62 736.10H729.92M732.46 736.10H749.26M751.06 736.10H752.36M754.90 736.10H756.70" stroke="#248686" stroke-width="1.7" fill="none"/><path d="M419.20 489.10V505.60M419.20 507.40V508.70M419.20 511.24V528.04M419.20 529.84V531.14M419.20 533.68V550.48M419.20 552.28V553.58M419.20 556.12V572.92M419.20 574.72V576.02M419.20 578.56V595.36M419.20 597.16V598.46M419.20 601.00V617.80M419.20 619.60V620.90M419.20 623.44V640.24M419.20 642.04V643.34M419.20 645.88V662.68M419.20 664.48V665.78M419.20 668.32V685.12M419.20 686.92V688.22M419.20 690.76V707.56M419.20 709.36V710.66M419.20 713.20V730.00M419.20 731.80V733.10M419.20 735.64V737.10" stroke="#248686" stroke-width="1.7" fill="none"/><rect x="416.20" y="486.10" width="6" height="6" fill="#000"/><rect x="486.31" y="533" width="224.33" height="1.1" fill="#5c5cf0"/><rect x="483.21" y="531.10" width="6.2" height="6" fill="#000"/><rect x="528.08" y="531.10" width="6.2" height="6" fill="#000"/><rect x="572.94" y="531.10" width="6.2" height="6" fill="#000"/><rect x="617.81" y="531.10" width="6.2" height="6" fill="#000"/><rect x="662.67" y="531.10" width="6.2" height="6" fill="#000"/><rect x="208" y="534" width="722" height="1" fill="#8a8a8a"/><path d="M531.18 623.86V634.8L548.6 648.3" fill="none" stroke="#0000ff" stroke-width="1.5"/><path d="M576.04 623.86V634.8" fill="none" stroke="#0000ff" stroke-width="1.5"/><path d="M620.91 623.86V634.8L603.2 648.3" fill="none" stroke="#0000ff" stroke-width="1.5"/><path d="M665.77 623.86V668.74H615.8" fill="none" stroke="#0000ff" stroke-width="1.5"/><rect x="614.4" y="660" width="2.8" height="17.7" fill="#0000ff"/><circle cx="576.04" cy="668.74" r="33.8" fill="none" stroke="#0000ff" stroke-width="1.5"/><path d="M576 684.5C579 678 583 678 585 682C587 686 590 685 592 680" fill="none" stroke="#0000ff" stroke-width="1.6"/><rect x="528.03" y="665.59" width="6.3" height="6.3" fill="#000"/><text transform="translate(211.70,139.8) scale(0.734,1)" font-family="Liberation Serif" font-size="13.44" fill="#000" stroke="#000" stroke-width="0.05" text-anchor="middle">D</text><text transform="translate(212.25,397.8) scale(0.836,1)" font-family="Liberation Serif" font-size="13.44" fill="#000" stroke="#000" stroke-width="0.05" text-anchor="middle">E</text><text transform="translate(212.25,655.7) scale(0.917,1)" font-family="Liberation Serif" font-size="13.28" fill="#000" stroke="#000" stroke-width="0.05" text-anchor="middle">F</text><text transform="translate(536.46,40.6) scale(1.000,1)" font-family="Liberation Serif" font-size="20.61" fill="#0000ff" stroke="#0000ff" stroke-width="0.35" text-anchor="middle">3</text><text transform="translate(546.86,40.6) scale(0.714,1)" font-family="Liberation Serif" font-size="20.61" fill="#0000ff" stroke="#0000ff" stroke-width="0.35" text-anchor="middle">G</text><text transform="translate(557.26,40.6) scale(1.000,1)" font-family="Liberation Serif" font-size="20.61" fill="#0000ff" stroke="#0000ff" stroke-width="0.35" text-anchor="middle">3</text><text transform="translate(567.66,40.6) scale(0.559,1)" font-family="Liberation Serif" font-size="20.61" fill="#0000ff" stroke="#0000ff" stroke-width="0.35" text-anchor="middle">M</text><text transform="translate(578.06,40.6) scale(0.681,1)" font-family="Liberation Serif" font-size="20.61" fill="#0000ff" stroke="#0000ff" stroke-width="0.35" text-anchor="middle">X</text><text transform="translate(588.46,40.6) scale(1.000,1)" font-family="Liberation Serif" font-size="20.61" fill="#0000ff" stroke="#0000ff" stroke-width="0.35" text-anchor="middle">2</text><rect x="594.18" y="32.57" width="9.36" height="1.2" fill="#0000ff"/><text transform="translate(609.26,40.6) scale(0.658,1)" font-family="Liberation Serif" font-size="20.61" fill="#0000ff" stroke="#0000ff" stroke-width="0.35" text-anchor="middle">A</text><text transform="translate(619.66,40.6) scale(1.000,1)" font-family="Liberation Serif" font-size="20.61" fill="#0000ff" stroke="#0000ff" stroke-width="0.35" text-anchor="middle">2</text><text transform="translate(630.06,40.6) scale(1.000,1)" font-family="Liberation Serif" font-size="20.61" fill="#0000ff" stroke="#0000ff" stroke-width="0.35" text-anchor="middle">0</text><text transform="translate(640.46,40.6) scale(1.000,1)" font-family="Liberation Serif" font-size="20.61" fill="#0000ff" stroke="#0000ff" stroke-width="0.35" text-anchor="middle">0</text><text transform="translate(650.86,40.6) scale(1.000,1)" font-family="Liberation Serif" font-size="20.61" fill="#0000ff" stroke="#0000ff" stroke-width="0.35" text-anchor="middle">2</text><rect x="656.58" y="32.57" width="9.36" height="1.2" fill="#0000ff"/><text transform="translate(671.66,40.6) scale(0.663,1)" font-family="Liberation Serif" font-size="20.61" fill="#0000ff" stroke="#0000ff" stroke-width="0.35" text-anchor="middle">V</text><text transform="translate(682.06,40.6) scale(1.000,1)" font-family="Liberation Serif" font-size="20.61" fill="#0000ff" stroke="#0000ff" stroke-width="0.35" text-anchor="middle">1</text><text transform="translate(560.04,114.0) scale(0.701,1)" font-family="Liberation Serif" font-size="15.27" fill="#0000ff" stroke="#0000ff" stroke-width="0.2" text-anchor="middle">D</text><text transform="translate(567.64,114.0) scale(0.719,1)" font-family="Liberation Serif" font-size="15.27" fill="#0000ff" stroke="#0000ff" stroke-width="0.2" text-anchor="middle">R</text><text transform="translate(575.24,114.0) scale(1.000,1)" font-family="Liberation Serif" font-size="15.27" fill="#0000ff" stroke="#0000ff" stroke-width="0.2" text-anchor="middle">I</text><text transform="translate(582.84,114.0) scale(0.655,1)" font-family="Liberation Serif" font-size="15.27" fill="#0000ff" stroke="#0000ff" stroke-width="0.2" text-anchor="middle">V</text><text transform="translate(590.44,114.0) scale(0.860,1)" font-family="Liberation Serif" font-size="15.27" fill="#0000ff" stroke="#0000ff" stroke-width="0.2" text-anchor="middle">E</text><text transform="translate(518.96,145.3) scale(0.656,1)" font-family="Liberation Serif" font-size="15.27" fill="#000" stroke="#000" stroke-width="0.2" text-anchor="middle">U</text><text transform="translate(526.36,145.3) scale(1.000,1)" font-family="Liberation Serif" font-size="15.27" fill="#000" stroke="#000" stroke-width="0.2" text-anchor="middle">/</text><text transform="translate(533.76,145.3) scale(0.774,1)" font-family="Liberation Serif" font-size="15.27" fill="#000" stroke="#000" stroke-width="0.2" text-anchor="middle">T</text><text transform="translate(541.16,145.3) scale(1.000,1)" font-family="Liberation Serif" font-size="15.27" fill="#000" stroke="#000" stroke-width="0.2" text-anchor="middle">1</text><text transform="translate(563.96,145.3) scale(0.637,1)" font-family="Liberation Serif" font-size="15.27" fill="#000" stroke="#000" stroke-width="0.2" text-anchor="middle">V</text><text transform="translate(571.36,145.3) scale(1.000,1)" font-family="Liberation Serif" font-size="15.27" fill="#000" stroke="#000" stroke-width="0.2" text-anchor="middle">/</text><text transform="translate(578.76,145.3) scale(0.774,1)" font-family="Liberation Serif" font-size="15.27" fill="#000" stroke="#000" stroke-width="0.2" text-anchor="middle">T</text><text transform="translate(586.16,145.3) scale(1.000,1)" font-family="Liberation Serif" font-size="15.27" fill="#000" stroke="#000" stroke-width="0.2" text-anchor="middle">2</text><text transform="translate(609.46,145.3) scale(0.474,1)" font-family="Liberation Serif" font-size="15.27" fill="#000" stroke="#000" stroke-width="0.2" text-anchor="middle">W</text><text transform="translate(616.86,145.3) scale(1.000,1)" font-family="Liberation Serif" font-size="15.27" fill="#000" stroke="#000" stroke-width="0.2" text-anchor="middle">/</text><text transform="translate(624.26,145.3) scale(0.774,1)" font-family="Liberation Serif" font-size="15.27" fill="#000" stroke="#000" stroke-width="0.2" text-anchor="middle">T</text><text transform="translate(631.66,145.3) scale(1.000,1)" font-family="Liberation Serif" font-size="15.27" fill="#000" stroke="#000" stroke-width="0.2" text-anchor="middle">3</text><text transform="translate(661.18,144.7) scale(0.605,1)" font-family="Liberation Serif" font-size="14.50" fill="#000" stroke="#000" stroke-width="0.2" text-anchor="middle">G</text><text transform="translate(667.38,144.7) scale(1.000,1)" font-family="Liberation Serif" font-size="14.50" fill="#000" stroke="#000" stroke-width="0.2" text-anchor="middle">'</text><text transform="translate(742.72,114.4) scale(0.696,1)" font-family="Liberation Serif" font-size="15.27" fill="#0000ff" stroke="#0000ff" stroke-width="0.2" text-anchor="middle">D</text><text transform="translate(750.27,114.4) scale(0.797,1)" font-family="Liberation Serif" font-size="15.27" fill="#0000ff" stroke="#0000ff" stroke-width="0.2" text-anchor="middle">C</text><text transform="translate(765.37,114.4) scale(1.000,1)" font-family="Liberation Serif" font-size="15.27" fill="#0000ff" stroke="#0000ff" stroke-width="0.2" text-anchor="middle">r</text><text transform="translate(772.92,114.4) scale(1.000,1)" font-family="Liberation Serif" font-size="15.27" fill="#0000ff" stroke="#0000ff" stroke-width="0.2" text-anchor="middle">e</text><text transform="translate(780.47,114.4) scale(1.000,1)" font-family="Liberation Serif" font-size="15.27" fill="#0000ff" stroke="#0000ff" stroke-width="0.2" text-anchor="middle">a</text><text transform="translate(788.02,114.4) scale(1.000,1)" font-family="Liberation Serif" font-size="15.27" fill="#0000ff" stroke="#0000ff" stroke-width="0.2" text-anchor="middle">c</text><text transform="translate(795.57,114.4) scale(1.000,1)" font-family="Liberation Serif" font-size="15.27" fill="#0000ff" stroke="#0000ff" stroke-width="0.2" text-anchor="middle">t</text><text transform="translate(803.12,114.4) scale(1.000,1)" font-family="Liberation Serif" font-size="15.27" fill="#0000ff" stroke="#0000ff" stroke-width="0.2" text-anchor="middle">o</text><text transform="translate(810.67,114.4) scale(1.000,1)" font-family="Liberation Serif" font-size="15.27" fill="#0000ff" stroke="#0000ff" stroke-width="0.2" text-anchor="middle">r</text><text transform="translate(843.84,107.0) scale(0.740,1)" font-family="Liberation Serif" font-size="16.03" fill="#0000ff" stroke="#0000ff" stroke-width="0.2" text-anchor="middle">B</text><text transform="translate(851.44,107.0) scale(1.000,1)" font-family="Liberation Serif" font-size="16.03" fill="#0000ff" stroke="#0000ff" stroke-width="0.2" text-anchor="middle">r</text><text transform="translate(859.04,107.0) scale(1.000,1)" font-family="Liberation Serif" font-size="16.03" fill="#0000ff" stroke="#0000ff" stroke-width="0.2" text-anchor="middle">a</text><text transform="translate(866.64,107.0) scale(0.907,1)" font-family="Liberation Serif" font-size="16.03" fill="#0000ff" stroke="#0000ff" stroke-width="0.2" text-anchor="middle">k</text><text transform="translate(874.24,107.0) scale(1.000,1)" font-family="Liberation Serif" font-size="16.03" fill="#0000ff" stroke="#0000ff" stroke-width="0.2" text-anchor="middle">i</text><text transform="translate(881.84,107.0) scale(0.944,1)" font-family="Liberation Serif" font-size="16.03" fill="#0000ff" stroke="#0000ff" stroke-width="0.2" text-anchor="middle">n</text><text transform="translate(889.44,107.0) scale(0.996,1)" font-family="Liberation Serif" font-size="16.03" fill="#0000ff" stroke="#0000ff" stroke-width="0.2" text-anchor="middle">g</text><text transform="translate(840.50,123.0) scale(1.000,1)" font-family="Liberation Serif" font-size="15.27" fill="#0000ff" stroke="#0000ff" stroke-width="0.2" text-anchor="middle">r</text><text transform="translate(848.00,123.0) scale(1.000,1)" font-family="Liberation Serif" font-size="15.27" fill="#0000ff" stroke="#0000ff" stroke-width="0.2" text-anchor="middle">e</text><text transform="translate(855.50,123.0) scale(1.000,1)" font-family="Liberation Serif" font-size="15.27" fill="#0000ff" stroke="#0000ff" stroke-width="0.2" text-anchor="middle">s</text><text transform="translate(863.00,123.0) scale(1.000,1)" font-family="Liberation Serif" font-size="15.27" fill="#0000ff" stroke="#0000ff" stroke-width="0.2" text-anchor="middle">i</text><text transform="translate(870.50,123.0) scale(1.000,1)" font-family="Liberation Serif" font-size="15.27" fill="#0000ff" stroke="#0000ff" stroke-width="0.2" text-anchor="middle">s</text><text transform="translate(878.00,123.0) scale(1.000,1)" font-family="Liberation Serif" font-size="15.27" fill="#0000ff" stroke="#0000ff" stroke-width="0.2" text-anchor="middle">t</text><text transform="translate(885.50,123.0) scale(1.000,1)" font-family="Liberation Serif" font-size="15.27" fill="#0000ff" stroke="#0000ff" stroke-width="0.2" text-anchor="middle">o</text><text transform="translate(893.00,123.0) scale(1.000,1)" font-family="Liberation Serif" font-size="15.27" fill="#0000ff" stroke="#0000ff" stroke-width="0.2" text-anchor="middle">r</text><text transform="translate(893.04,97.0) scale(0.719,1)" font-family="Liberation Serif" font-size="15.27" fill="#0000ff" stroke="#0000ff" stroke-width="0.2" text-anchor="middle">R</text><text transform="translate(900.64,97.0) scale(1.000,1)" font-family="Liberation Serif" font-size="15.27" fill="#0000ff" stroke="#0000ff" stroke-width="0.2" text-anchor="middle">e</text><text transform="translate(908.24,97.0) scale(1.000,1)" font-family="Liberation Serif" font-size="15.27" fill="#0000ff" stroke="#0000ff" stroke-width="0.2" text-anchor="middle">g</text><text transform="translate(915.84,97.0) scale(1.000,1)" font-family="Liberation Serif" font-size="15.27" fill="#0000ff" stroke="#0000ff" stroke-width="0.2" text-anchor="middle">e</text><text transform="translate(923.44,97.0) scale(0.991,1)" font-family="Liberation Serif" font-size="15.27" fill="#0000ff" stroke="#0000ff" stroke-width="0.2" text-anchor="middle">n</text><text transform="translate(931.04,97.0) scale(1.000,1)" font-family="Liberation Serif" font-size="15.27" fill="#0000ff" stroke="#0000ff" stroke-width="0.2" text-anchor="middle">e</text><text transform="translate(911.54,114.0) scale(0.991,1)" font-family="Liberation Serif" font-size="15.27" fill="#0000ff" stroke="#0000ff" stroke-width="0.2" text-anchor="middle">b</text><text transform="translate(919.14,114.0) scale(1.000,1)" font-family="Liberation Serif" font-size="15.27" fill="#0000ff" stroke="#0000ff" stroke-width="0.2" text-anchor="middle">r</text><text transform="translate(926.74,114.0) scale(1.000,1)" font-family="Liberation Serif" font-size="15.27" fill="#0000ff" stroke="#0000ff" stroke-width="0.2" text-anchor="middle">a</text><text transform="translate(923.04,131.6) scale(0.975,1)" font-family="Liberation Serif" font-size="15.27" fill="#0000ff" stroke="#0000ff" stroke-width="0.2" text-anchor="middle">u</text><text transform="translate(930.64,131.6) scale(0.991,1)" font-family="Liberation Serif" font-size="15.27" fill="#0000ff" stroke="#0000ff" stroke-width="0.2" text-anchor="middle">n</text><text transform="translate(751.88,145.0) scale(1.000,1)" font-family="Liberation Serif" font-size="15.27" fill="#000" stroke="#000" stroke-width="0.2" text-anchor="middle">1</text><text transform="translate(759.08,145.0) scale(0.932,1)" font-family="Liberation Serif" font-size="15.27" fill="#000" stroke="#000" stroke-width="0.2" text-anchor="middle">+</text><text transform="translate(788.46,145.0) scale(0.915,1)" font-family="Liberation Serif" font-size="15.27" fill="#000" stroke="#000" stroke-width="0.2" text-anchor="middle">P</text><text transform="translate(795.86,145.0) scale(1.000,1)" font-family="Liberation Serif" font-size="15.27" fill="#000" stroke="#000" stroke-width="0.2" text-anchor="middle">/</text><text transform="translate(803.26,145.0) scale(1.000,1)" font-family="Liberation Serif" font-size="15.27" fill="#000" stroke="#000" stroke-width="0.2" text-anchor="middle">2</text><text transform="translate(810.66,145.0) scale(0.958,1)" font-family="Liberation Serif" font-size="15.27" fill="#000" stroke="#000" stroke-width="0.2" text-anchor="middle">+</text><text transform="translate(863.00,145.0) scale(0.710,1)" font-family="Liberation Serif" font-size="15.27" fill="#000" stroke="#000" stroke-width="0.2" text-anchor="middle">R</text><text transform="translate(870.50,145.0) scale(0.767,1)" font-family="Liberation Serif" font-size="15.27" fill="#000" stroke="#000" stroke-width="0.2" text-anchor="middle">B</text><text transform="translate(926.00,145.0) scale(0.674,1)" font-family="Liberation Serif" font-size="15.27" fill="#000" stroke="#000" stroke-width="0.2" text-anchor="middle">N</text><rect x="489.99" y="377.70" width="9.18" height="1.2" fill="#0000ff"/><text transform="translate(504.78,386.0) scale(0.644,1)" font-family="Liberation Serif" font-size="21.37" fill="#0000ff" stroke="#0000ff" stroke-width="0.35" text-anchor="middle">X</text><text transform="translate(514.98,386.0) scale(1.000,1)" font-family="Liberation Serif" font-size="21.37" fill="#0000ff" stroke="#0000ff" stroke-width="0.35" text-anchor="middle">3</text><text transform="translate(542.00,384.0) scale(0.988,1)" font-family="Liberation Serif" font-size="15.27" fill="#000" stroke="#000" stroke-width="0.2" text-anchor="middle">9</text><text transform="translate(587.50,384.0) scale(1.000,1)" font-family="Liberation Serif" font-size="15.27" fill="#000" stroke="#000" stroke-width="0.2" text-anchor="middle">1</text><text transform="translate(594.50,384.0) scale(0.995,1)" font-family="Liberation Serif" font-size="15.27" fill="#000" stroke="#000" stroke-width="0.2" text-anchor="middle">0</text><text transform="translate(632.20,384.0) scale(1.000,1)" font-family="Liberation Serif" font-size="15.27" fill="#000" stroke="#000" stroke-width="0.2" text-anchor="middle">1</text><text transform="translate(639.20,384.0) scale(1.000,1)" font-family="Liberation Serif" font-size="15.27" fill="#000" stroke="#000" stroke-width="0.2" text-anchor="middle">1</text><text transform="translate(677.40,384.0) scale(1.000,1)" font-family="Liberation Serif" font-size="15.27" fill="#000" stroke="#000" stroke-width="0.2" text-anchor="middle">1</text><text transform="translate(684.40,384.0) scale(1.000,1)" font-family="Liberation Serif" font-size="15.27" fill="#000" stroke="#000" stroke-width="0.2" text-anchor="middle">2</text><text transform="translate(469.48,442.0) scale(0.421,1)" font-family="Liberation Serif" font-size="21.37" fill="#0000ff" stroke="#0000ff" stroke-width="0.35" text-anchor="middle">W</text><text transform="translate(478.68,442.0) scale(1.000,1)" font-family="Liberation Serif" font-size="21.37" fill="#0000ff" stroke="#0000ff" stroke-width="0.35" text-anchor="middle">1</text><text transform="translate(444.00,459.8) scale(1.000,1)" font-family="Liberation Serif" font-size="14.96" fill="#5f9a3c" stroke="#5f9a3c" stroke-width="0.2" text-anchor="middle">/</text><text transform="translate(451.50,459.8) scale(1.000,1)" font-family="Liberation Serif" font-size="14.96" fill="#5f9a3c" stroke="#5f9a3c" stroke-width="0.2" text-anchor="middle">1</text><text transform="translate(459.00,459.8) scale(1.000,1)" font-family="Liberation Serif" font-size="14.96" fill="#5f9a3c" stroke="#5f9a3c" stroke-width="0.2" text-anchor="middle">.</text><text transform="translate(466.50,459.8) scale(1.000,1)" font-family="Liberation Serif" font-size="14.96" fill="#5f9a3c" stroke="#5f9a3c" stroke-width="0.2" text-anchor="middle">5</text><text transform="translate(474.00,459.8) scale(1.000,1)" font-family="Liberation Serif" font-size="14.96" fill="#5f9a3c" stroke="#5f9a3c" stroke-width="0.2" text-anchor="middle">:</text><text transform="translate(481.50,459.8) scale(0.866,1)" font-family="Liberation Serif" font-size="14.96" fill="#5f9a3c" stroke="#5f9a3c" stroke-width="0.2" text-anchor="middle">E</text><text transform="translate(269.70,482.7) scale(0.749,1)" font-family="Liberation Serif" font-size="20.15" fill="#0000ff" stroke="#0000ff" stroke-width="0.35" text-anchor="middle">Ö</text><text transform="translate(280.20,482.7) scale(0.918,1)" font-family="Liberation Serif" font-size="20.15" fill="#0000ff" stroke="#0000ff" stroke-width="0.35" text-anchor="middle">L</text><text transform="translate(290.70,482.7) scale(0.976,1)" font-family="Liberation Serif" font-size="20.15" fill="#0000ff" stroke="#0000ff" stroke-width="0.35" text-anchor="middle">F</text><text transform="translate(301.20,482.7) scale(0.918,1)" font-family="Liberation Serif" font-size="20.15" fill="#0000ff" stroke="#0000ff" stroke-width="0.35" text-anchor="middle">L</text><text transform="translate(311.70,482.7) scale(0.901,1)" font-family="Liberation Serif" font-size="20.15" fill="#0000ff" stroke="#0000ff" stroke-width="0.35" text-anchor="middle">E</text><text transform="translate(322.20,482.7) scale(0.703,1)" font-family="Liberation Serif" font-size="20.15" fill="#0000ff" stroke="#0000ff" stroke-width="0.35" text-anchor="middle">X</text><text transform="translate(343.20,482.7) scale(0.840,1)" font-family="Liberation Serif" font-size="20.15" fill="#0000ff" stroke="#0000ff" stroke-width="0.35" text-anchor="middle">C</text><text transform="translate(353.70,482.7) scale(0.918,1)" font-family="Liberation Serif" font-size="20.15" fill="#0000ff" stroke="#0000ff" stroke-width="0.35" text-anchor="middle">L</text><text transform="translate(364.20,482.7) scale(0.680,1)" font-family="Liberation Serif" font-size="20.15" fill="#0000ff" stroke="#0000ff" stroke-width="0.35" text-anchor="middle">A</text><text transform="translate(374.70,482.7) scale(1.000,1)" font-family="Liberation Serif" font-size="20.15" fill="#0000ff" stroke="#0000ff" stroke-width="0.35" text-anchor="middle">S</text><text transform="translate(385.20,482.7) scale(1.000,1)" font-family="Liberation Serif" font-size="20.15" fill="#0000ff" stroke="#0000ff" stroke-width="0.35" text-anchor="middle">S</text><text transform="translate(395.70,482.7) scale(1.000,1)" font-family="Liberation Serif" font-size="20.15" fill="#0000ff" stroke="#0000ff" stroke-width="0.35" text-anchor="middle">I</text><text transform="translate(406.20,482.7) scale(0.840,1)" font-family="Liberation Serif" font-size="20.15" fill="#0000ff" stroke="#0000ff" stroke-width="0.35" text-anchor="middle">C</text><text transform="translate(427.20,482.7) scale(1.000,1)" font-family="Liberation Serif" font-size="20.15" fill="#0000ff" stroke="#0000ff" stroke-width="0.35" text-anchor="middle">1</text><text transform="translate(437.70,482.7) scale(1.000,1)" font-family="Liberation Serif" font-size="20.15" fill="#0000ff" stroke="#0000ff" stroke-width="0.35" text-anchor="middle">0</text><text transform="translate(448.20,482.7) scale(1.000,1)" font-family="Liberation Serif" font-size="20.15" fill="#0000ff" stroke="#0000ff" stroke-width="0.35" text-anchor="middle">0</text><text transform="translate(469.20,482.7) scale(0.840,1)" font-family="Liberation Serif" font-size="20.15" fill="#0000ff" stroke="#0000ff" stroke-width="0.35" text-anchor="middle">C</text><text transform="translate(479.70,482.7) scale(0.699,1)" font-family="Liberation Serif" font-size="20.15" fill="#0000ff" stroke="#0000ff" stroke-width="0.35" text-anchor="middle">Y</text><text transform="translate(459.46,506.7) scale(1.000,1)" font-family="Liberation Serif" font-size="19.85" fill="#0000ff" stroke="#0000ff" stroke-width="0.35" text-anchor="middle">5</text><text transform="translate(469.86,506.7) scale(0.742,1)" font-family="Liberation Serif" font-size="19.85" fill="#0000ff" stroke="#0000ff" stroke-width="0.35" text-anchor="middle">G</text><text transform="translate(480.26,506.7) scale(1.000,1)" font-family="Liberation Serif" font-size="19.85" fill="#0000ff" stroke="#0000ff" stroke-width="0.35" text-anchor="middle">4</text><text transform="translate(438.82,530.8) scale(1.000,1)" font-family="Liberation Serif" font-size="20.31" fill="#0000ff" stroke="#0000ff" stroke-width="0.35" text-anchor="middle">7</text><text transform="translate(449.12,530.8) scale(1.000,1)" font-family="Liberation Serif" font-size="20.31" fill="#0000ff" stroke="#0000ff" stroke-width="0.35" text-anchor="middle">5</text><text transform="translate(459.42,530.8) scale(1.000,1)" font-family="Liberation Serif" font-size="20.31" fill="#0000ff" stroke="#0000ff" stroke-width="0.35" text-anchor="middle">0</text><text transform="translate(480.02,530.8) scale(0.667,1)" font-family="Liberation Serif" font-size="20.31" fill="#0000ff" stroke="#0000ff" stroke-width="0.35" text-anchor="middle">V</text><text x="315.5" y="512.5" font-family="Liberation Serif" font-size="19" fill="#0000ff">+</text><text x="326.8" y="513.8" font-family="Liberation Serif" font-size="20.5" letter-spacing="0.8" fill="#0000ff">控制柜外</text><text transform="translate(542.10,530.8) scale(0.810,1)" font-family="Liberation Serif" font-size="10.69" fill="#ff0000" stroke="#ff0000" stroke-width="0.05" text-anchor="middle">B</text><text transform="translate(548.10,530.8) scale(0.699,1)" font-family="Liberation Serif" font-size="10.69" fill="#ff0000" stroke="#ff0000" stroke-width="0.05" text-anchor="middle">K</text><text transform="translate(586.40,530.8) scale(0.810,1)" font-family="Liberation Serif" font-size="10.69" fill="#ff0000" stroke="#ff0000" stroke-width="0.05" text-anchor="middle">B</text><text transform="translate(592.40,530.8) scale(0.712,1)" font-family="Liberation Serif" font-size="10.69" fill="#ff0000" stroke="#ff0000" stroke-width="0.05" text-anchor="middle">N</text><text transform="translate(631.34,530.8) scale(0.747,1)" font-family="Liberation Serif" font-size="10.69" fill="#ff0000" stroke="#ff0000" stroke-width="0.05" text-anchor="middle">G</text><text transform="translate(637.44,530.8) scale(0.708,1)" font-family="Liberation Serif" font-size="10.69" fill="#ff0000" stroke="#ff0000" stroke-width="0.05" text-anchor="middle">Y</text><text transform="translate(676.10,530.8) scale(0.704,1)" font-family="Liberation Serif" font-size="10.69" fill="#ff0000" stroke="#ff0000" stroke-width="0.05" text-anchor="middle">G</text><text transform="translate(681.85,530.8) scale(0.682,1)" font-family="Liberation Serif" font-size="10.69" fill="#ff0000" stroke="#ff0000" stroke-width="0.05" text-anchor="middle">N</text><text transform="translate(687.60,530.8) scale(0.667,1)" font-family="Liberation Serif" font-size="10.69" fill="#ff0000" stroke="#ff0000" stroke-width="0.05" text-anchor="middle">Y</text><text transform="translate(693.35,530.8) scale(0.859,1)" font-family="Liberation Serif" font-size="10.69" fill="#ff0000" stroke="#ff0000" stroke-width="0.05" text-anchor="middle">E</text><text transform="translate(575.46,667.1) scale(0.570,1)" font-family="Liberation Serif" font-size="25.65" fill="#0000ff" stroke="#0000ff" stroke-width="0.35" text-anchor="middle">M</text><text transform="translate(563.60,689.7) scale(0.987,1)" font-family="Liberation Serif" font-size="20.31" fill="#0000ff" stroke="#0000ff" stroke-width="0.35" text-anchor="middle">3</text><text transform="translate(537.30,630.0) scale(0.660,1)" font-family="Liberation Serif" font-size="14.35" fill="#000" stroke="#000" stroke-width="0.2" text-anchor="middle">U</text><text transform="translate(583.10,630.0) scale(0.641,1)" font-family="Liberation Serif" font-size="14.35" fill="#000" stroke="#000" stroke-width="0.2" text-anchor="middle">V</text><text transform="translate(627.70,630.0) scale(0.477,1)" font-family="Liberation Serif" font-size="14.35" fill="#000" stroke="#000" stroke-width="0.2" text-anchor="middle">W</text><text transform="translate(672.00,630.0) scale(0.987,1)" font-family="Liberation Serif" font-size="14.35" fill="#000" stroke="#000" stroke-width="0.2" text-anchor="middle">P</text><text transform="translate(679.50,630.0) scale(0.903,1)" font-family="Liberation Serif" font-size="14.35" fill="#000" stroke="#000" stroke-width="0.2" text-anchor="middle">E</text><rect x="477.20" y="669.91" width="9.00" height="1.2" fill="#0000ff"/><text transform="translate(491.70,678.6) scale(0.493,1)" font-family="Liberation Serif" font-size="22.44" fill="#0000ff" stroke="#0000ff" stroke-width="0.35" text-anchor="middle">M</text><text transform="translate(501.70,678.6) scale(1.000,1)" font-family="Liberation Serif" font-size="22.44" fill="#0000ff" stroke="#0000ff" stroke-width="0.35" text-anchor="middle">1</text><text transform="translate(465.26,695.6) scale(1.000,1)" font-family="Liberation Serif" font-size="15.88" fill="#5f9a3c" stroke="#5f9a3c" stroke-width="0.2" text-anchor="middle">/</text><text transform="translate(472.66,695.6) scale(1.000,1)" font-family="Liberation Serif" font-size="15.88" fill="#5f9a3c" stroke="#5f9a3c" stroke-width="0.2" text-anchor="middle">1</text><text transform="translate(480.06,695.6) scale(1.000,1)" font-family="Liberation Serif" font-size="15.88" fill="#5f9a3c" stroke="#5f9a3c" stroke-width="0.2" text-anchor="middle">.</text><text transform="translate(487.46,695.6) scale(1.000,1)" font-family="Liberation Serif" font-size="15.88" fill="#5f9a3c" stroke="#5f9a3c" stroke-width="0.2" text-anchor="middle">5</text><text transform="translate(494.86,695.6) scale(1.000,1)" font-family="Liberation Serif" font-size="15.88" fill="#5f9a3c" stroke="#5f9a3c" stroke-width="0.2" text-anchor="middle">:</text><text transform="translate(502.26,695.6) scale(0.873,1)" font-family="Liberation Serif" font-size="15.88" fill="#5f9a3c" stroke="#5f9a3c" stroke-width="0.2" text-anchor="middle">F</text><text transform="translate(474.92,713.0) scale(1.000,1)" font-family="Liberation Serif" font-size="15.88" fill="#000" stroke="#000" stroke-width="0.2" text-anchor="middle">5</text><text transform="translate(482.22,713.0) scale(1.000,1)" font-family="Liberation Serif" font-size="15.88" fill="#000" stroke="#000" stroke-width="0.2" text-anchor="middle">.</text><text transform="translate(489.52,713.0) scale(1.000,1)" font-family="Liberation Serif" font-size="15.88" fill="#000" stroke="#000" stroke-width="0.2" text-anchor="middle">5</text><text transform="translate(496.82,713.0) scale(0.879,1)" font-family="Liberation Serif" font-size="15.88" fill="#000" stroke="#000" stroke-width="0.2" text-anchor="middle">k</text><text transform="translate(504.12,713.0) scale(0.450,1)" font-family="Liberation Serif" font-size="15.88" fill="#000" stroke="#000" stroke-width="0.2" text-anchor="middle">W</text><rect x="455" y="336" width="364" height="100" fill="none" stroke="#ff2116" stroke-width="6" stroke-linejoin="round"/></g></svg>
</div>
</body></html>
